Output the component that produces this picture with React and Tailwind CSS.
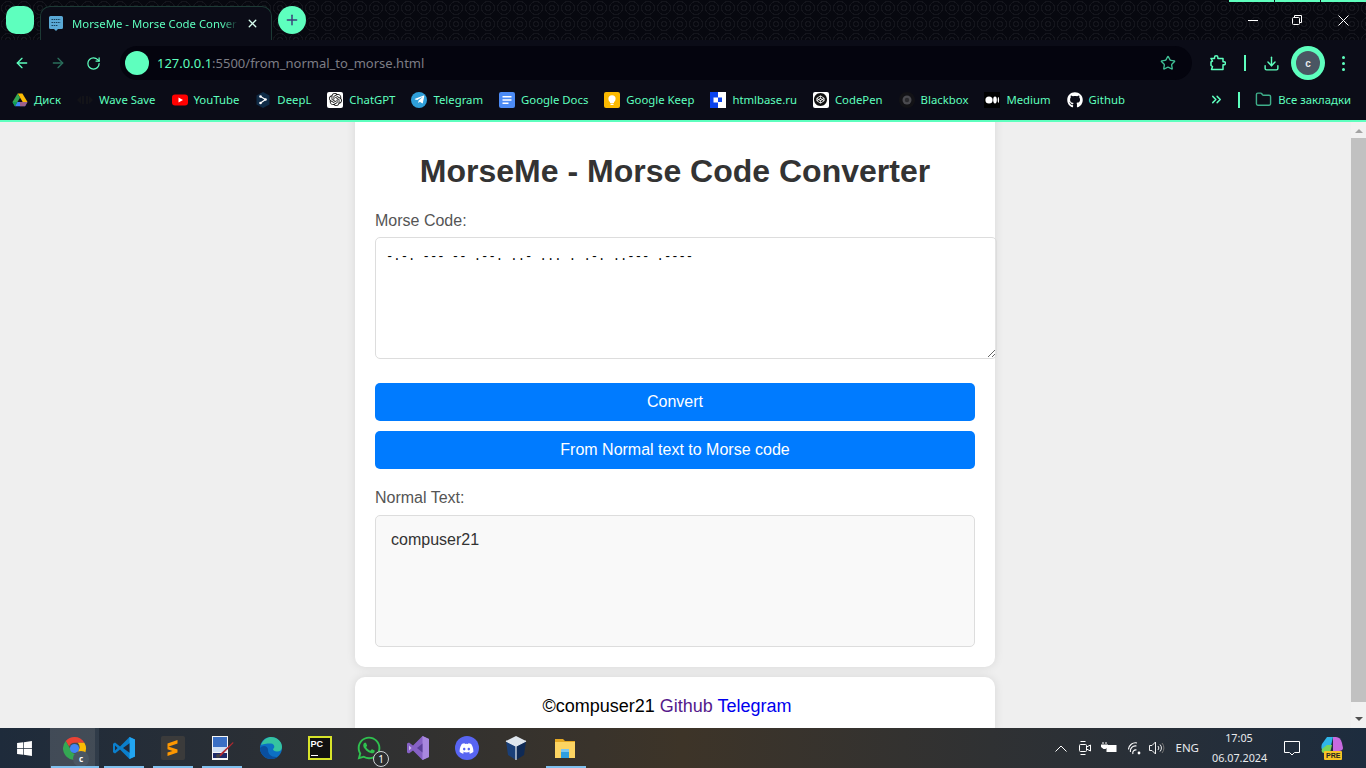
import React from "react";
import {
  ArrowLeft,
  ArrowRight,
  RotateCw,
  Star,
  Download,
  ChevronsRight,
  Folder,
  Plus,
  X,
} from "lucide-react";
import {
  FaGithub,
  FaWhatsapp,
  FaDiscord,
  FaTelegramPlane,
  FaWindows,
} from "react-icons/fa";
import { SiOpenai, SiCodepen } from "react-icons/si";

const Drive = () => (
  <svg width="16" height="16" viewBox="0 0 16 16">
    <path d="M5.6 1.5h4.8L15.5 10h-4.8z" fill="#fbbc04" />
    <path d="M5.6 1.5 .5 10l2.4 4.2L8 5.7z" fill="#34a853" />
    <path d="M5.3 10h10.2l-2.4 4.2H2.9z" fill="#4285f4" />
    <path d="M.5 10h4.8l-2.4 4.2z" fill="#0f9d58" />
    <path d="M13 14.2H8V10h5l2.5 0z" fill="#ea4335" opacity=".55" />
  </svg>
);

const WaveSave = () => (
  <svg width="16" height="16" viewBox="0 0 16 16" fill="#131318">
    <path d="M0 8l4-4v8zM16 8l-4-4v8zM5 4h2v8H5zM9 4h2v8H9z" />
  </svg>
);

const YouTube = () => (
  <svg width="16" height="16" viewBox="0 0 16 16">
    <rect x="0" y="2.5" width="16" height="11" rx="3" fill="#f00" />
    <path d="M6.5 5.5 11 8l-4.5 2.5z" fill="#fff" />
  </svg>
);

const DeepL = () => (
  <svg width="16" height="16" viewBox="0 0 16 16">
    <path d="M8 0l6.5 3.5v9L8 16l-6.5-3.5v-9z" fill="#0f2b46" />
    <path d="M5.5 4.5 10.5 7.5 5.5 11" stroke="#fff" strokeWidth="1.2" fill="none" />
    <circle cx="5.5" cy="4.5" r="1.3" fill="#fff" />
    <circle cx="10.5" cy="7.5" r="1.3" fill="#fff" />
    <circle cx="5.5" cy="11" r="1.3" fill="#fff" />
  </svg>
);

const Docs = () => (
  <svg width="16" height="16" viewBox="0 0 16 16">
    <rect width="16" height="16" rx="2" fill="#4c8bf5" />
    <path d="M3.5 4h9v1.6h-9zM3.5 7.2h9v1.6h-9zM3.5 10.4h6v1.6h-6z" fill="#fff" />
  </svg>
);

const Keep = () => (
  <svg width="16" height="16" viewBox="0 0 16 16">
    <rect width="16" height="16" rx="2" fill="#fbb900" />
    <circle cx="8" cy="6.8" r="3.6" fill="#fff" />
    <rect x="6" y="9.5" width="4" height="1.5" fill="#fff" />
    <rect x="6.5" y="11.6" width="3" height="1.4" fill="#fff" />
  </svg>
);

const HtmlBase = () => (
  <svg width="16" height="16" viewBox="0 0 16 16">
    <rect width="8" height="16" fill="#0a44ee" />
    <rect x="8" width="8" height="16" fill="#fff" />
    <rect x="3.5" y="5.5" width="4.5" height="5" fill="#fff" />
    <rect x="8" y="5.5" width="4" height="4.5" fill="#0a44ee" />
  </svg>
);

const Blackbox = () => (
  <svg width="16" height="16" viewBox="0 0 16 16">
    <circle cx="8" cy="8" r="8" fill="#121216" />
    <circle cx="8" cy="8" r="4.5" fill="#4a4a4f" />
    <circle cx="8" cy="8" r="2.2" fill="#2a2a2e" />
  </svg>
);

const Medium = () => (
  <svg width="16" height="16" viewBox="0 0 16 16">
    <rect width="16" height="16" fill="#000" />
    <circle cx="5" cy="8" r="3.6" fill="#fff" />
    <ellipse cx="11" cy="8" rx="1.8" ry="3.4" fill="#fff" />
    <ellipse cx="14.4" cy="8" rx="0.7" ry="3" fill="#fff" />
  </svg>
);

const bookmarks = [
  { name: "Диск", icon: <Drive /> },
  { name: "Wave Save", icon: <WaveSave /> },
  { name: "YouTube", icon: <YouTube /> },
  { name: "DeepL", icon: <DeepL /> },
  {
    name: "ChatGPT",
    icon: (
      <span className="w-4 h-4 bg-white rounded-[2px] flex items-center justify-center">
        <SiOpenai size={13} color="#111" />
      </span>
    ),
  },
  {
    name: "Telegram",
    icon: (
      <span className="w-4 h-4 bg-[#2f9fd9] rounded-full flex items-center justify-center">
        <FaTelegramPlane size={11} color="#fff" />
      </span>
    ),
  },
  { name: "Google Docs", icon: <Docs /> },
  { name: "Google Keep", icon: <Keep /> },
  { name: "htmlbase.ru", icon: <HtmlBase /> },
  {
    name: "CodePen",
    icon: (
      <span className="w-4 h-4 bg-white rounded-[2px] flex items-center justify-center">
        <SiCodepen size={13} color="#111" />
      </span>
    ),
  },
  { name: "Blackbox", icon: <Blackbox /> },
  { name: "Medium", icon: <Medium /> },
  { name: "Github", icon: <FaGithub size={16} color="#fff" /> },
];

const ChromeIcon = () => (
  <svg width="25" height="25" viewBox="0 0 24 24">
    <path d="M12 1a11 11 0 0 1 9.5 5.5H12a5.5 5.5 0 0 0-5.2 3.7L3.6 4.9A11 11 0 0 1 12 1z" fill="#ea4335" />
    <path d="M3.6 4.9l4.8 8.3a5.5 5.5 0 0 0 5.2 4.2L10.5 22.9A11 11 0 0 1 3.6 4.9z" fill="#34a853" />
    <path d="M21.5 6.5A11 11 0 0 1 10.5 22.9l4.8-8.3a5.5 5.5 0 0 0-.3-8.1z" fill="#fbbc04" />
    <circle cx="12" cy="12" r="4.4" fill="#4285f4" />
  </svg>
);

const VsCode = () => (
  <svg width="24" height="24" viewBox="0 0 24 24">
    <path d="M17.5 1 23 3.6v16.8L17.5 23 8 13.5 3 17.4 1 16.2V7.8l2-1.2 5 3.9z" fill="#0b7fcc" />
    <path d="M17.5 1 23 3.6v16.8L17.5 23z" fill="#22a5f1" />
    <path d="M17.5 7.2 11 12l6.5 4.8z" fill="#20293a" />
    <path d="M3 9.4 5.6 12 3 14.6z" fill="#20293a" />
  </svg>
);

const Sublime = () => (
  <div className="w-6 h-6 bg-[#3b3b3b] rounded-[2px] flex items-center justify-center">
    <svg width="11" height="16" viewBox="0 0 11 16">
      <path d="M10.5 0v3.6L.5 7V3.4zM.5 6.2l10 3.4v3L.5 16v-3.4l5-1.7-5-1.6z" fill="#ff9800" />
    </svg>
  </div>
);

const Paint = () => (
  <svg width="24" height="26" viewBox="0 0 24 26">
    <rect x="2" y="1" width="16" height="24" fill="#f5f5f5" />
    <rect x="3" y="2" width="14" height="10" fill="#3a6fc4" />
    <rect x="3" y="12" width="14" height="5" fill="#cfe0f5" />
    <rect x="3" y="18" width="14" height="5" fill="#1e2a6a" />
    <path d="M23 7 9 20l1.5 1.5L23.5 8z" fill="#b02a30" />
    <circle cx="8" cy="21" r="2" fill="#444" />
  </svg>
);

const Edge = () => (
  <svg width="24" height="24" viewBox="0 0 24 24">
    <circle cx="12" cy="12" r="11" fill="#0c70c4" />
    <path d="M2 9C4 3 9 1 12 1c6 0 11 4.500 11 10 0 3-2 4.500-5 4.500-2.500 0-4-1-4-2.500 2-1 2-5-2-5.500C7 7 2 9 2 9z" fill="#35c3a0" />
    <path d="M9 14c0 4 3 7 8 7 1 0 2-.3 2-.3C17 22.500 14.500 23 12 23 6 23 1 18 1 12c2-3 8-3 8 2z" fill="#0a4f9e" />
  </svg>
);

const PyCharm = () => (
  <div className="w-[18px] h-[18px] border-2 border-[#d7e32a] bg-[#111] flex flex-col justify-between px-[1px] py-[1px] box-content">
    <span className="text-[9px] leading-[10px] font-bold text-white font-['Liberation_Sans',sans-serif]">PC</span>
    <span className="w-[7px] h-[1.5px] bg-white mb-[1px]"></span>
  </div>
);

const VisualStudio = () => (
  <svg width="22" height="24" viewBox="0 0 22 24">
    <path d="M15.500 0 22 3v18l-6.500 3L6 14.500 2 17.500 0 16.500v-9l2-1 4 3z" fill="#8661c5" />
    <path d="M15.500 0 22 3v18l-6.500 3z" fill="#a887df" />
    <path d="M15.500 7.500 10 12l5.500 4.500z" fill="#5a3f98" />
    <path d="M2 9.500 4.500 12 2 14.500z" fill="#cbb8ee" />
  </svg>
);

const VirtualBox = () => (
  <svg width="24" height="26" viewBox="0 0 24 26">
    <path d="M12 1 22 6 12 11 2 6z" fill="#dfe6ee" />
    <path d="M2 6l10 5v14L4 20z" fill="#1a3f78" />
    <path d="M22 6 12 11v14l8-5z" fill="#0f2a55" />
    <path d="M12 11v14M2 6l10 5 10-5" stroke="#e8eef5" strokeWidth="1.2" fill="none" />
  </svg>
);

const Explorer = () => (
  <svg width="24" height="24" viewBox="0 0 24 24">
    <path d="M2 3h8l2 2h10v4H2z" fill="#e5a822" />
    <rect x="2" y="6" width="20" height="16" fill="#fcd462" />
    <rect x="8" y="16" width="8" height="6" fill="#2f9fe0" />
    <rect x="8" y="13" width="8" height="3" fill="#7cc7ef" />
  </svg>
);

const Copilot = () => (
  <div className="relative w-[22px] h-6">
    <svg width="22" height="20" viewBox="0 0 22 20">
      <path d="M6 1h6L9 14H3C0 14 0 11 1 8z" fill="#2fb5e8" />
      <path d="M12 1h3c3 0 5 2 6 6l1 5c0 2-2 3-4 3h-6z" fill="#c86ae0" />
      <path d="M6 9h5l-2 8H3C1 17 0 15 1 13z" fill="#78d35a" />
    </svg>
    <span className="absolute left-[3px] bottom-0 bg-[#f7c325] text-[#222] text-[7px] leading-[9px] font-bold px-[2px] rounded-[1px] font-['Liberation_Sans',sans-serif]">
      PRE
    </span>
  </div>
);

const taskbarApps = [
  { key: "chrome", icon: <ChromeIcon />, line: "left-[1px] w-[48px]", active: true },
  { key: "code", icon: <VsCode />, line: "left-[5px] w-[40px]" },
  { key: "sublime", icon: <Sublime />, line: "left-[5px] w-[40px]" },
  { key: "paint", icon: <Paint />, line: "left-[5px] w-[40px]" },
  { key: "edge", icon: <Edge /> },
  { key: "pycharm", icon: <PyCharm /> },
  { key: "whatsapp", icon: <FaWhatsapp size={26} color="#2fc14f" />, badge: true },
  { key: "vs", icon: <VisualStudio /> },
  {
    key: "discord",
    icon: (
      <span className="w-6 h-6 rounded-full bg-[#5865f2] flex items-center justify-center">
        <FaDiscord size={15} color="#fff" />
      </span>
    ),
  },
  { key: "vbox", icon: <VirtualBox /> },
  { key: "explorer", icon: <Explorer />, line: "left-[6px] w-[40px]" },
];

const MeetIcon = () => (
  <svg width="12" height="16" viewBox="0 0 12 16" fill="none" stroke="#fff" strokeWidth="1">
    <rect x=".5" y="4.500" width="7" height="7" rx="1" />
    <path d="M7.500 7l4-2v6l-4-2M1.500 1.500h5M1.500 14.500h5" />
  </svg>
);

const BatteryIcon = () => (
  <svg width="16" height="12" viewBox="0 0 16 12">
    <path d="M2 0v2M5 0v2" stroke="#fff" />
    <path d="M0 2.500h7V5L4.500 7h-2L0 5z" fill="#fff" />
    <rect x="5.500" y="3" width="10" height="7" fill="#fff" />
  </svg>
);

const WifiIcon = () => (
  <svg width="13" height="13" viewBox="0 0 13 13" fill="none" stroke="#fff" strokeWidth="1.100">
    <path d="M.5 7.500A7 7 0 0 1 9 1M2.500 10a5 5 0 0 1 6-6M5 12a3 3 0 0 1 3.500-4" />
    <circle cx="11" cy="11" r="1.400" fill="#fff" stroke="none" />
  </svg>
);

const SpeakerIcon = () => (
  <svg width="16" height="14" viewBox="0 0 16 14" fill="none" stroke="#f0f0f0" strokeWidth="1">
    <path d="M.5 4.500h2.500l3.500-3.500v12L3 9.500H.5z" />
    <path d="M9 5a3 3 0 0 1 0 4M11 3.500a5 5 0 0 1 0 7" />
    <path d="M13 2a7.500 7.500 0 0 1 0 10" stroke="#777" />
  </svg>
);

export default function App() {
  return (
    <div className="w-[1366px] h-[768px] overflow-hidden flex flex-col bg-[#efefef] font-['Liberation_Sans',Arial,sans-serif]">
      {/* Tab strip */}
      <div className="h-10 shrink-0 flex items-start pl-[6px] bg-[#07080f] bg-[radial-gradient(circle,#07080f_0,#07080f_2px,#14151c_2px,#14151c_3px,#07080f_3px,#07080f_6px,#14151c_6px,#14151c_7px,#07080f_7px)] bg-[length:16px_16px]">
        <div className="mt-[6px] w-7 h-7 rounded-[10px] bg-[#5effbe]"></div>
        <div className="ml-[6px] mt-[6px] w-[232px] h-[34px] bg-[#0b0c17] rounded-t-[10px] flex items-center pl-[7px] pr-[12px] border border-b-0 border-[#1d3a35]">
          <svg width="16" height="18" viewBox="0 0 16 18" className="shrink-0">
            <path d="M2.500 1h11A1.500 1.500 0 0 1 15 2.500V12.500A1.500 1.500 0 0 1 13.500 14H10l-2 2-2-2H2.500A1.500 1.500 0 0 1 1 12.500V2.500A1.500 1.500 0 0 1 2.500 1z" fill="#5aa9d6" />
            <path d="M3.500 4.500h9M3.500 7.500h9M3.500 10.500h6" stroke="#17405c" strokeWidth="1.200" strokeDasharray="1.500 .7" />
          </svg>
          <span className="ml-[8px] w-[166px] h-[18px] leading-[18px] overflow-hidden whitespace-nowrap text-[11.35px] text-[#5effbe] font-['Noto_Sans',sans-serif] [mask-image:linear-gradient(to_right,black_90%,transparent)]">
            MorseMe - Morse Code Conver
          </span>
          <X size={13} color="#d8fff0" strokeWidth={2.500} className="ml-auto" />
        </div>
        <div className="ml-[6px] mt-[6px] w-7 h-7 rounded-full bg-[#5effbe] flex items-center justify-center">
          <Plus size={16} color="#3b3f78" strokeWidth={2.200} />
        </div>
        <div className="ml-auto relative w-[137px] h-10 flex">
          <div className="absolute top-0 left-0 w-[45px] h-[2px] bg-[#5effbe]"></div>
          <div className="absolute top-0 left-[46px] w-[45px] h-[2px] bg-[#5effbe]"></div>
          <div className="absolute top-0 left-[92px] w-[45px] h-[2px] bg-[#5effbe]"></div>
          <div className="w-[45px] flex items-center justify-center pl-[2px]">
            <div className="w-[10px] h-px bg-white"></div>
          </div>
          <div className="w-[46px] flex items-center justify-center">
            <svg width="10" height="10" viewBox="0 0 10 10" fill="none" stroke="#fff">
              <rect x=".5" y="2.500" width="7" height="7" rx="1" />
              <path d="M2.500 2.500V.5h7v7H7.500" />
            </svg>
          </div>
          <div className="w-[46px] flex items-center justify-center">
            <svg width="11" height="11" viewBox="0 0 11 11" stroke="#fff">
              <path d="M.5.5l10 10M10.500.5l-10 10" />
            </svg>
          </div>
        </div>
      </div>

      {/* Toolbar */}
      <div className="h-10 shrink-0 bg-[#0b0c17] flex items-start">
        <div className="w-[120px] h-[34px] mt-[6px] flex items-center shrink-0 pl-[14px] gap-5">
          <ArrowLeft size={16} color="#5effbe" />
          <ArrowRight size={16} color="#2b6f5c" />
          <RotateCw size={15} color="#5effbe" />
        </div>
        <div className="mt-[6px] w-[1072px] h-[34px] bg-[#04040e] rounded-full flex items-center pl-[5px] pr-[16px]">
          <div className="w-6 h-6 rounded-full bg-[#5effbe]"></div>
          <span className="ml-2 pt-px text-[13px] font-['Noto_Sans',sans-serif] text-[#7d7d85]">
            <span className="text-[#5effbe]">127.0.0.1</span>:5500/from_normal_to_morse.html
          </span>
          <Star size={16} color="#3fbf95" strokeWidth={2} className="ml-auto" />
        </div>
        <div className="h-[34px] mt-[6px] flex items-center">
          <svg width="16" height="16" viewBox="0 0 16 16" fill="none" stroke="#5effbe" strokeWidth="1.500" className="ml-[18px]">
            <path d="M1 3.500h3.500V2.500a1.700 1.700 0 0 1 3.400 0v1H13v3.300h1a1.500 1.500 0 0 1 0 3h-1V14.500H1.500l1-3-1.500-1V7l1.500-.8z" strokeLinejoin="round" />
          </svg>
          <div className="ml-[18px] w-[2px] h-4 bg-[#5effbe]"></div>
          <Download size={17} color="#5effbe" className="ml-[17px]" />
          <div className="ml-[11px] w-[34px] h-[34px] rounded-full bg-[#5effbe] flex items-center justify-center">
            <div className="w-6 h-6 rounded-full bg-[#4a5663] text-[#e8eaed] text-[10px] font-bold flex items-center justify-center">
              c
            </div>
          </div>
          <div className="ml-[17px] flex flex-col gap-[3px]">
            <div className="w-[3px] h-[3px] rounded-full bg-[#5effbe]"></div>
            <div className="w-[3px] h-[3px] rounded-full bg-[#5effbe]"></div>
            <div className="w-[3px] h-[3px] rounded-full bg-[#5effbe]"></div>
          </div>
        </div>
      </div>

      {/* Bookmarks */}
      <div className="h-10 shrink-0 bg-[#0b0c17] flex items-center pl-3 pr-[15px] text-[11.35px] text-[#5effbe] font-['Noto_Sans',sans-serif] whitespace-nowrap">
        <div className="flex items-center gap-4">
          {bookmarks.map((b) => (
            <div key={b.name} className="flex items-center gap-[6px]">
              {b.icon}
              <span>{b.name}</span>
            </div>
          ))}
        </div>
        <div className="ml-auto flex items-center">
          <ChevronsRight size={15} color="#5effbe" strokeWidth={2.300} />
          <div className="ml-[14px] w-[2px] h-4 bg-[#5effbe]"></div>
          <Folder size={17} color="#3fae8a" className="ml-[15px]" />
          <span className="ml-[6px]">Все закладки</span>
        </div>
      </div>
      <div className="h-[2px] shrink-0 bg-[#5effbe]"></div>

      {/* Page */}
      <div className="flex-1 min-h-0 flex overflow-hidden">
        <div className="flex-1 min-w-0 pr-px flex flex-col items-center overflow-hidden">
          <div className="w-[640px] shrink-0 -mt-[19px] bg-white rounded-[10px] p-5 shadow-[0_0_10px_rgba(0,0,0,0.1)]">
            <h1 className="mt-[10px] pt-5 text-[32px] leading-[37px] font-bold text-[#333] text-center">
              MorseMe - Morse Code Converter
            </h1>
            <label className="block mt-[22px] text-base leading-[18px] text-[#555]">Morse Code:</label>
            <textarea
              readOnly
              value="-.-. --- -- .--. ..- ... . .-. ..--- .----"
              className="block mt-[7px] w-[622px] h-[122px] p-[10px] border border-[#ddd] rounded-[5px] text-[12.2px] font-['Liberation_Mono',monospace] text-black outline-none"
            ></textarea>
            <button className="block mt-6 w-full h-[38px] bg-[#007bff] text-white rounded-[5px] text-base">
              Convert
            </button>
            <button className="block mt-[10px] w-full h-[38px] bg-[#007bff] text-white rounded-[5px] text-base">
              From Normal text to Morse code
            </button>
            <label className="block mt-5 text-base leading-[18px] text-[#555]">Normal Text:</label>
            <div className="mt-2 h-[132px] border border-[#ddd] bg-[#f9f9f9] rounded-[5px] p-[15px] text-base leading-[18px] text-[#333]">
              compuser21
            </div>
          </div>
          <div className="w-[640px] shrink-0 mt-[10px] bg-white rounded-[10px] pt-[19px] pr-4 pb-5 shadow-[0_0_10px_rgba(0,0,0,0.1)] text-center text-lg leading-[21px] text-black">
            ©compuser21 <a className="text-[#551a8b]">Github</a> <a className="text-[#0000ee]">Telegram</a>
          </div>
        </div>
        <div className="w-[15px] shrink-0 bg-[#f1f1f1] flex flex-col items-center">
          <div className="mt-[7px] w-0 h-0 border-x-[4px] border-x-transparent border-b-[4px] border-b-[#a3a3a3]"></div>
          <div className="mt-[5px] w-[15px] h-[564px] bg-[#c1c1c1]"></div>
          <div className="mt-[15px] w-0 h-0 border-x-[4px] border-x-transparent border-t-[4px] border-t-[#505050]"></div>
        </div>
      </div>

      {/* Taskbar */}
      <div className="h-10 shrink-0 flex items-center bg-gradient-to-r from-[#1e2b3b] via-[#3d3428] to-[#1d2c3e] text-[#e8eaed] font-['Noto_Sans',sans-serif]">
        <div className="w-[50px] flex items-center pl-4">
          <FaWindows size={17} color="#fff" />
        </div>
        {taskbarApps.map((app) => (
          <div
            key={app.key}
            className={`relative w-[49px] h-10 flex items-center justify-center ${app.active ? "bg-white/15" : ""}`}
          >
            {app.icon}
            {app.active && <span className="absolute right-0 top-0 h-full w-[4px] bg-[#1e2b3b]/50"></span>}
            {app.key === "chrome" && (
              <span className="absolute left-[23px] top-[23px] w-4 h-4 rounded-full bg-[#4a5663] text-[8px] font-bold text-white flex items-center justify-center">
                c
              </span>
            )}
            {app.badge && (
              <span className="absolute left-[29px] top-[23px] w-4 h-4 rounded-full border border-[#cfd2d6] bg-[#2c2e30] text-[10px] text-white flex items-center justify-center">
                1
              </span>
            )}
            {app.line && <span className={`absolute bottom-0 h-[2px] bg-[#7fc0ee] ${app.line}`}></span>}
          </div>
        ))}
        <div className="ml-auto flex items-center">
          <svg width="12" height="7" viewBox="0 0 12 7" fill="none" stroke="#fff">
            <path d="M.5 6.500 6 1l5.500 5.500" />
          </svg>
          <div className="ml-3 flex items-center">
            <MeetIcon />
          </div>
          <div className="ml-[10px] flex items-center">
            <BatteryIcon />
          </div>
          <div className="ml-[11px] flex items-center">
            <WifiIcon />
          </div>
          <div className="ml-2 flex items-center">
            <SpeakerIcon />
          </div>
          <span className="ml-[10px] text-[11.5px]">ENG</span>
          <div className="ml-[13px] w-[54px] text-center text-[10.8px] leading-[20px]">
            <div>17:05</div>
            <div>06.07.2024</div>
          </div>
          <svg width="16" height="15" viewBox="0 0 16 15" fill="none" stroke="#fff" className="ml-[18px]">
            <path d="M.5.5h15v11h-5L8 14l-2.500-2.500h-5z" />
          </svg>
          <div className="ml-[21px] mr-[23px]">
            <Copilot />
          </div>
        </div>
      </div>
    </div>
  );
}
